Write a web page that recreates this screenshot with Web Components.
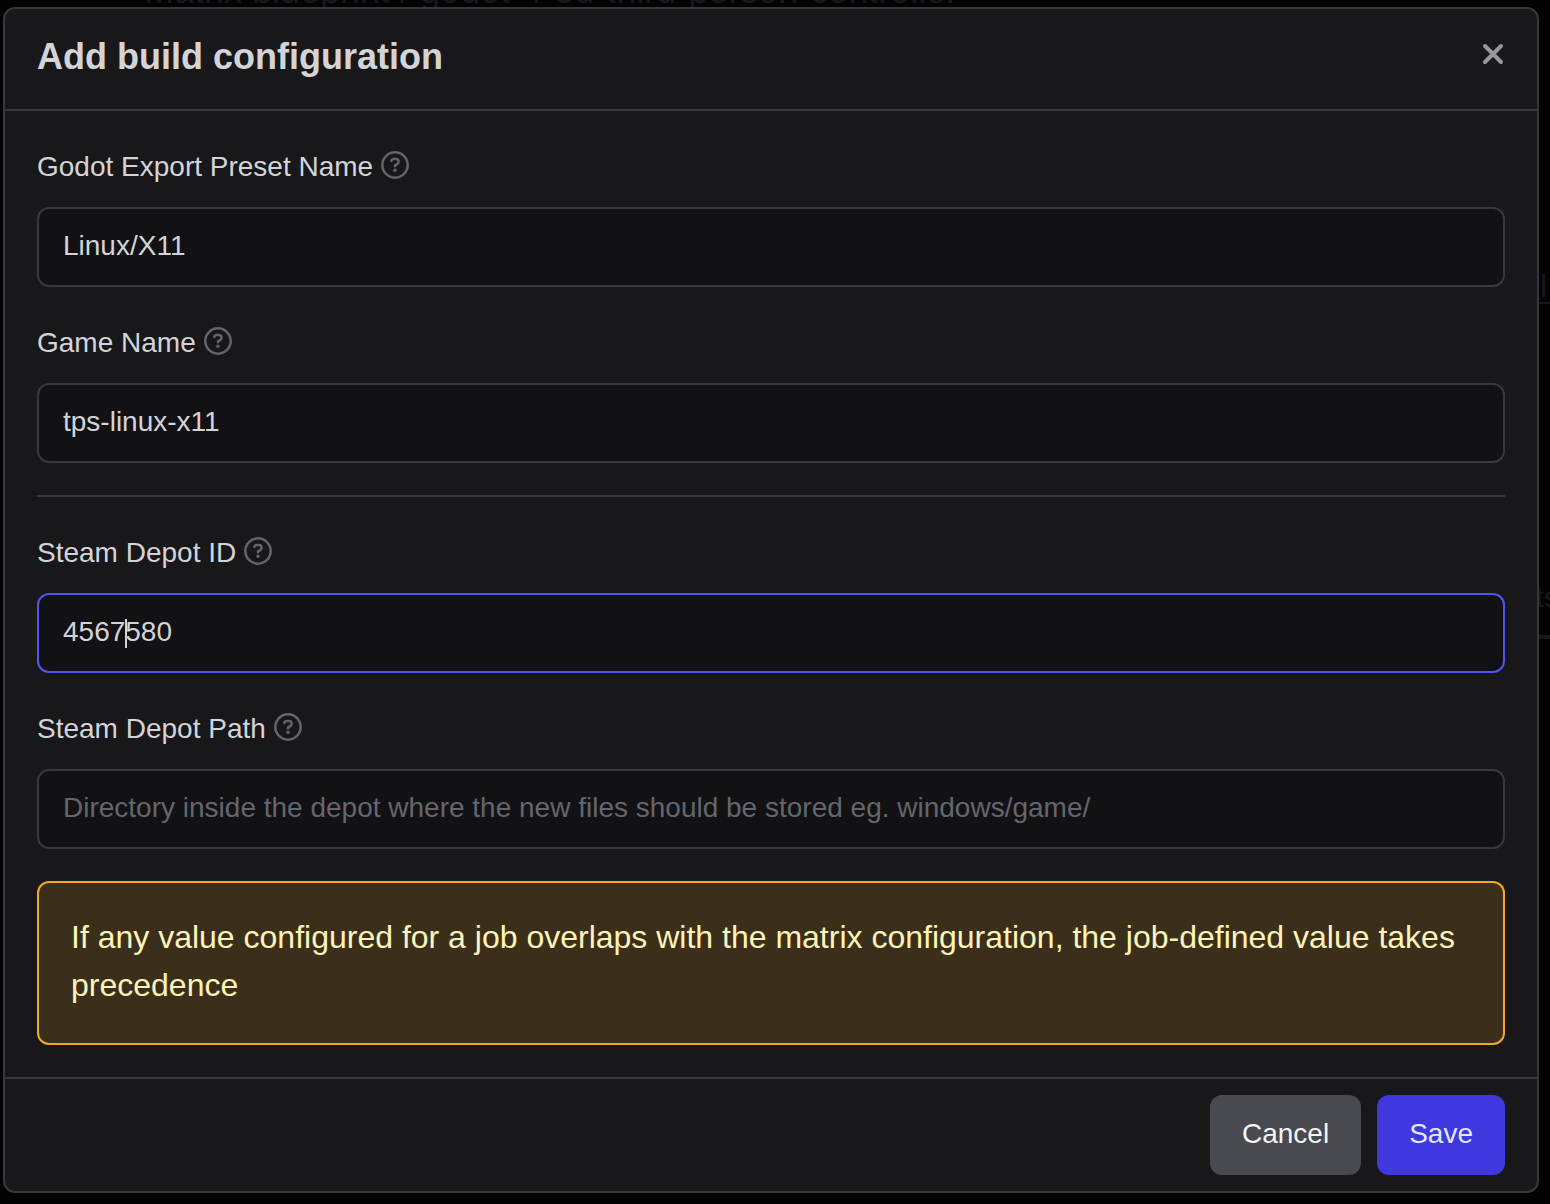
<!DOCTYPE html>
<html lang="en">
<head>
<meta charset="utf-8">
<title>Add build configuration</title>
<style>
  html, body { margin: 0; min-height: 100vh; background: #030303; }
  body { font-family: "Liberation Sans", Arial, sans-serif; font-size: 28px; line-height: 48px; color: #d4d4d8; position: relative; overflow: hidden; }
</style>
</head>
<body>
<page-backdrop></page-backdrop>
<modal-dialog heading="Add build configuration">
  <form-field label="Godot Export Preset Name" value="Linux/X11"></form-field>
  <form-field label="Game Name" value="tps-linux-x11"></form-field>
  <section-divider></section-divider>
  <form-field label="Steam Depot ID" value="4567580" caret="4"></form-field>
  <form-field label="Steam Depot Path" placeholder="Directory inside the depot where the new files should be stored eg. windows/game/"></form-field>
  <warning-note>If any value configured for a job overlaps with the matrix configuration, the job-defined value takes precedence</warning-note>
  <action-button slot="actions">Cancel</action-button>
  <action-button slot="actions" variant="primary">Save</action-button>
</modal-dialog>
<script>
const define = (name, html, setup) => {
  const template = document.createElement('template');
  template.innerHTML = '<style>*{box-sizing:border-box}</style>' + html;
  customElements.define(name, class extends HTMLElement {
    constructor() {
      super();
      this.attachShadow({ mode: 'open' }).append(template.content.cloneNode(true));
    }
    connectedCallback() { if (setup) setup(this, this.shadowRoot); }
  });
};

// Dimmed page that lies under the dialog
define('page-backdrop', `
  <style>
    :host { display: block; position: absolute; inset: 0; overflow: hidden; color: #18181a; }
    div { position: absolute; white-space: nowrap; }
    .title { left: 144px; top: -33px; font-size: 36px; }
    .a { left: 1540px; top: 262px; font-size: 32px; }
    .b { left: 1536px; top: 574px; }
    i { position: absolute; left: 1539px; right: 0; height: 2px; background: #18181a; }
    .r1 { top: 302px; } .r2 { top: 635px; height: 4px; }
  </style>
  <div class="title">Matrix blueprint / godot-4-3d-third-person-controller</div>
  <div class="a">l</div><i class="r1"></i>
  <div class="b">ts</div><i class="r2"></i>`);

define('help-icon', `
  <style>:host { display: block; width: 28px; height: 28px; color: #63636b; } svg { display: block; }</style>
  <svg width="28" height="28" viewBox="0 0 28 28" fill="none" stroke="currentColor" stroke-width="2.500" stroke-linecap="round" stroke-linejoin="round" aria-hidden="true">
    <circle cx="14" cy="14" r="12.700"/>
    <path d="M10.300 9.900C10.600 8.500 11.700 8 13 8h1.600c1.800 0 3 1.100 3 2.700 0 1.200-.6 2-1.700 2.600L14 14.400v.9"/>
    <circle cx="14" cy="19.300" r="1.700" fill="currentColor" stroke="none"/>
  </svg>`);

define('section-divider', `
  <style>:host { display: block; height: 2px; background: #37373d; }</style>`);

define('warning-note', `
  <style>:host { display: block; box-sizing: border-box; padding: 30px 32px 34px; border: 2px solid #f5a623; border-radius: 12px; background: #3b2f1b; color: #fef3b8; font-size: 32px; line-height: 48px; } p { margin: 0; }</style>
  <p role="note"><slot></slot></p>`);

define('action-button', `
  <style>
    :host { display: block; }
    button { display: block; height: 80px; padding: 0 32px 2px; border: 0; border-radius: 12px; background: #494950; color: #f4f4f5; font: inherit; cursor: pointer; }
    :host([variant="primary"]) button { background: #4038df; color: #e0e7ff; }
  </style>
  <button type="button"><slot></slot></button>`);

define('form-field', `
  <style>
    :host { display: flex; flex-direction: column; gap: 16px; }
    .caption { display: flex; gap: 8px; height: 48px; }
    help-icon { margin-top: 8px; }
    .control { position: relative; }
    input { display: block; width: 100%; height: 80px; padding: 0 24px 2px; border: 2px solid #37373d; border-radius: 12px; background: #121214; color: #d4d4d8; font: inherit; outline: 0; caret-color: transparent; }
    input::placeholder { color: #65656e; opacity: 1; }
    :host([caret]) input { border-color: #4f55f0; }
    .caret { display: none; position: absolute; left: calc(26px + var(--caret) * 1ch); top: 26px; width: 2px; height: 29px; background: #d4d4d8; }
    :host([caret]) .caret { display: block; }
  </style>
  <div class="caption"><label for="control"></label><help-icon></help-icon></div>
  <div class="control"><input id="control" type="text" autocomplete="off" spellcheck="false"><span class="caret"></span></div>`,
  (host, root) => {
    const input = root.querySelector('input');
    root.querySelector('label').textContent = host.getAttribute('label');
    input.value = host.getAttribute('value') || '';
    input.placeholder = host.getAttribute('placeholder') || '';
    if (host.hasAttribute('caret')) host.style.setProperty('--caret', host.getAttribute('caret'));
  });

define('modal-dialog', `
  <style>
    :host { display: block; position: relative; padding: 7px 11px 11px 3px; }
    section { border: 2px solid #37373d; border-radius: 12px; background: #18181a; }
    header { display: flex; justify-content: space-between; align-items: flex-start; height: 102px; padding: 24px 32px 0; border-bottom: 2px solid #37373d; }
    h2 { margin: 0; font-size: 36px; line-height: 48px; font-weight: 700; }
    button { display: block; width: 24px; height: 24px; margin-top: 9px; padding: 0; border: 0; background: none; color: #98989c; cursor: pointer; }
    svg { display: block; }
    .body { display: flex; flex-direction: column; gap: 32px; padding: 32px; }
    footer { display: flex; justify-content: flex-end; gap: 16px; padding: 16px 32px; border-top: 2px solid #37373d; }
  </style>
  <section role="dialog" aria-labelledby="heading">
    <header>
      <h2 id="heading"></h2>
      <button type="button" aria-label="Close"><svg width="24" height="24" viewBox="0 0 24 24" stroke="currentColor" stroke-width="4" stroke-linecap="round"><path d="M4 4l16 16M20 4L4 20"/></svg></button>
    </header>
    <div class="body"><slot></slot></div>
    <footer><slot name="actions"></slot></footer>
  </section>`,
  (host, root) => { root.querySelector('h2').textContent = host.getAttribute('heading'); });
</script>
</body>
</html>
